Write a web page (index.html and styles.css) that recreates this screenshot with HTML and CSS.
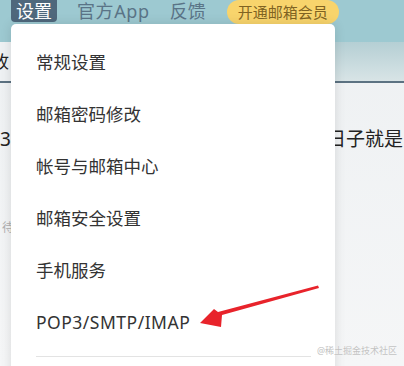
FILE: index.html
```html
<!DOCTYPE html>
<html lang="zh-CN">
<head>
  <meta charset="UTF-8" />
  <meta name="viewport" content="width=device-width,initial-scale=1.0"/>
  <title>邮箱设置</title>
  <link rel="stylesheet" href="styles.css">
</head>
<body>

<header class="topbar">
  <a href="#" class="nav-item active">设置</a>
  <a href="#" class="nav-item latin">官方App</a>
  <a href="#" class="nav-item last">反馈</a>
  <a href="#" class="vip-btn">开通邮箱会员</a>
</header>

<div class="tabbar">
  <span class="tab">收</span>
</div>

<div class="content">
  <p class="mail-line"><span>3:</span><span>日子就是</span></p>
  <p class="mail-hint">待</p>
</div>

<!-- settings dropdown -->
<ul class="menu">
  <li>常规设置</li>
  <li>邮箱密码修改</li>
  <li>帐号与邮箱中心</li>
  <li>邮箱安全设置</li>
  <li>手机服务</li>
  <li class="latin">POP3/SMTP/IMAP</li>
  <li class="divider"></li>
</ul>

<svg class="arrow" width="404" height="366" viewBox="0 0 404 366">
  <path d="M318 285.5 L319 288 L222 315 L221 327 L200 323 L214 309 L218 312 Z" fill="#e8232b"/>
</svg>

<div class="watermark">@稀土掘金技术社区</div>

</body>
</html>
```

FILE: styles.css
```css
* {
  margin: 0;
  padding: 0;
  box-sizing: border-box;
}
body {
  font-family: "Noto Sans", "Noto Sans CJK SC", sans-serif;
  width: 404px;
  height: 366px;
  overflow: hidden;
  position: relative;
  background: linear-gradient(#edf0f2, #f5f6f7);
  color: #222;
}
a {
  color: inherit;
  text-decoration: none;
}
.topbar {
  height: 42px;
  background: #9dc9d1;
  display: flex;
  align-items: flex-start;
  padding-left: 11px;
}
.nav-item {
  font-size: 18px;
  line-height: 22px;
  height: 22px;
  color: #5a7487;
  margin-right: 22px;
}
.nav-item.latin {
  letter-spacing: 0.6px;
  margin-right: 20px;
}
.nav-item.last {
  margin-right: 21px;
}
.nav-item.active {
  background: #4f687c;
  color: #fff;
  padding: 0 5px;
  border-radius: 0 0 4px 4px;
  margin-right: 20px;
}
.vip-btn {
  background: #f8d46c;
  color: #806322;
  font-size: 15px;
  line-height: 24px;
  height: 24px;
  padding: 0 11px;
  border-radius: 12px;
}
.tabbar {
  height: 41px;
  background: linear-gradient(#b5cfd4, #d8e4e6);
  border-bottom: 2px solid #5c7282;
  display: flex;
}
.tab {
  width: 40px;
  background: #eef1f3;
  font-size: 17px;
  line-height: 39px;
  color: #222;
  text-indent: -8px;
  overflow: hidden;
}
.content {
  padding-top: 43px;
}
.mail-line {
  display: flex;
  justify-content: space-between;
  font-size: 19px;
  line-height: 26px;
  margin-right: 1px;
}
.mail-hint {
  margin-top: 66px;
  padding-left: 2px;
  font-size: 12px;
  color: #b0b0b0;
}
.menu {
  position: absolute;
  left: 11px;
  top: 24px;
  width: 324px;
  height: 360px;
  background: #fff;
  border-radius: 5px;
  box-shadow: 0 0 12px rgba(0, 0, 0, 0.12);
  list-style: none;
  padding: 12px 24px 0 25px;
}
.menu li {
  height: 52px;
  line-height: 52px;
  font-size: 17.5px;
  color: #333;
}
.menu li.latin {
  letter-spacing: 0.5px;
}
.menu .divider {
  height: 1px;
  margin-top: 8px;
  background: #e3e3e3;
}
.arrow {
  position: absolute;
  left: 0;
  top: 0;
}
.watermark {
  position: absolute;
  left: 317px;
  top: 344px;
  font-size: 9px;
  white-space: nowrap;
  color: #c2c2c2;
  text-shadow: 0 0 1px #fff;
}
```
